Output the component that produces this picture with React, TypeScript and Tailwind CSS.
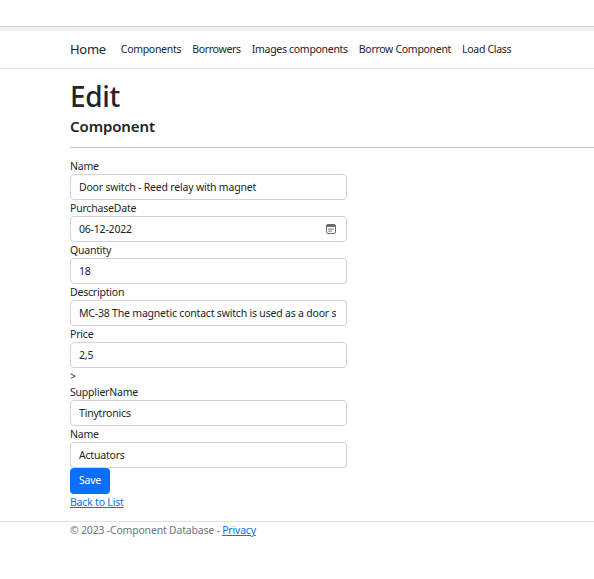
const font = { fontFamily: '"Noto Sans", "Segoe UI", sans-serif' }

function CalendarIcon() {
  return (
    <svg width="10" height="10" viewBox="0 0 10 10" className="shrink-0">
      <rect x="0.5" y="0.5" width="9" height="9" rx="1.5" fill="#fff" stroke="#6b6b6b" />
      <rect x="0.5" y="0.5" width="9" height="2.5" rx="1" fill="#6b6b6b" />
      <rect x="2.5" y="4.5" width="1.2" height="1.2" fill="#444" />
      <rect x="4.4" y="4.5" width="1.2" height="1.2" fill="#444" />
      <rect x="6.3" y="4.5" width="1.2" height="1.2" fill="#444" />
      <rect x="2.5" y="6.5" width="1.2" height="1.2" fill="#444" />
      <rect x="4.4" y="6.5" width="1.2" height="1.2" fill="#444" />
    </svg>
  )
}

function Field({ label, value, date }: { label: string; value: string; date?: boolean }) {
  return (
    <div className="flex flex-col">
      <label className="h-4 text-[10.5px] leading-4 tracking-[-0.2px] text-[#212529]">{label}</label>
      <div className="flex h-[26px] w-[277px] items-center rounded-[4px] border border-[#ced4da] bg-white pl-[8px] pr-[10px]">
        <span className="flex-1 overflow-hidden whitespace-nowrap pt-[1px] text-[10.5px] tracking-[-0.2px] text-[#212529]">{value}</span>
        {date && <CalendarIcon />}
      </div>
    </div>
  )
}

export default function App() {
  return (
    <div className="min-h-screen bg-white text-[#212529]" style={font}>
      <div className="h-[26px]" />
      <div className="h-[5px] border-t border-[#d0d0d0] bg-[#f0f0f0]" />
      <nav className="flex h-[38px] items-center border-b border-[#dee2e6] pl-[70px]">
        <span className="mr-[15px] text-[13px] tracking-[-0.3px] text-[#212529]">Home</span>
        <div className="flex gap-[11px] text-[10.5px] tracking-[-0.3px] text-[#212529]">
          <span>Components</span>
          <span>Borrowers</span>
          <span>Images components</span>
          <span>Borrow Component</span>
          <span>Load Class</span>
        </div>
      </nav>

      <main className="pl-[70px]">
        <h1 className="mt-[10px] text-[28px] font-medium leading-[34px] tracking-[-0.3px]">Edit</h1>
        <h4 className="mt-[3px] text-[15px] font-semibold leading-[20px] tracking-[-0.1px]">Component</h4>
        <hr className="mt-[11px] border-t border-[#c8c9ca]" />

        <form className="mt-[10px] flex flex-col">
          <Field label="Name" value="Door switch - Reed relay with magnet" />
          <Field label="PurchaseDate" value="06-12-2022" date />
          <Field label="Quantity" value="18" />
          <Field label="Description" value="MC-38 The magnetic contact switch is used as a door sensor" />
          <Field label="Price" value="2,5" />
          <div className="h-4 text-[10.5px] leading-4">&gt;</div>
          <Field label="SupplierName" value="Tinytronics" />
          <Field label="Name" value="Actuators" />
          <div className="flex">
            <button type="button" className="h-[26px] w-[40px] rounded-[4px] bg-[#0d6efd] text-[10.5px] tracking-[-0.2px] text-white">
              Save
            </button>
          </div>
          <a href="#" className="h-4 w-fit text-[10.5px] leading-4 tracking-[-0.2px] text-[#0d6efd] underline">Back to List</a>
        </form>
      </main>

      <footer className="mt-[11px] border-t border-[#dee2e6] pl-[70px]">
        <p className="h-4 text-[10.5px] leading-4 tracking-[-0.2px] text-[#6c757d]">
          © 2023 -Component Database - <a href="#" className="text-[#0d6efd] underline">Privacy</a>
        </p>
      </footer>
    </div>
  )
}
